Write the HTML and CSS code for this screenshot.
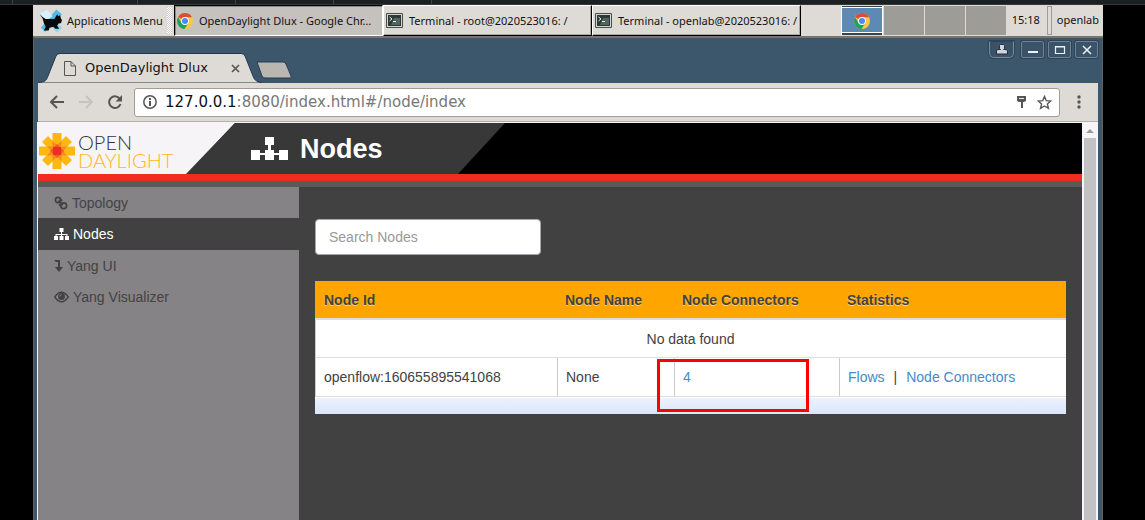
FILE: index.html
```html
<!DOCTYPE html>
<html lang="en">
<head>
<meta charset="utf-8">
<title>OpenDaylight Dlux</title>
<link rel="stylesheet" href="styles.css">
</head>
<body>
<svg class="defs" aria-hidden="true">
  <defs>
    <symbol id="chrome" viewBox="0 0 16 16">
      <circle cx="8" cy="8" r="8" fill="#fbc93b"/>
      <path d="M8 8 1.1 4A8 8 0 0 1 15 4.200H8z" fill="#dd4b3a"/>
      <path d="M1.100 4A8 8 0 0 0 7.500 16L11.300 10 8 8 4.600 10z" fill="#1da261"/>
      <circle cx="8" cy="8" r="3.900" fill="#fff"/>
      <circle cx="8" cy="8" r="3" fill="#4a8af4"/>
    </symbol>
    <symbol id="terminal" viewBox="0 0 17 15">
      <path d="M.5.500h16v14H.5z" fill="#d4d6d2" stroke="#4a4f4b"/>
      <path d="M2 2h13v11H2z" fill="#2b3a36"/>
      <path d="M8 5h6v7H5z" fill="#51665e"/>
      <path d="M3.500 4l2.500 2-2.500 2M7 8.500h3" stroke="#eee" fill="none"/>
    </symbol>
    <symbol id="sitemap" viewBox="0 0 15 12">
      <path d="M5.500 0h4v4H8v2h5.500v2H15v4h-4V8h1.500V7H8v1h1.500v4h-4V8H7V7H2.500v1H4v4H0V8h1.500V6H7V4H5.500z" fill="currentColor"/>
    </symbol>
  </defs>
</svg>
<div class="host-strip"><i></i><i></i><i></i><i></i><i></i></div>
<div class="desktop">
  <nav class="taskbar" aria-label="Taskbar">
    <button class="apps">
      <svg width="25" height="25" viewBox="0 0 25 25"><path d="M1 5 7 1l17 19-5 5-6-6-7 6-4-5 6-7z" fill="#8fd3ef"/><path d="M13 7 18 1l6 5-17 18-5-4z" fill="#52b9e8"/><path d="M1 5l7-4 6 7-7 5z" fill="#d8f0fa"/><path d="M1 6l3 3 3 2h9l3-5 1 2 2-1 1 4 1 1-1 3-3 1-1 2 2 3h-4l-2-2-4 1-1 3H5l2-4-2-4-1-4z" fill="#080808"/></svg>
      <span>Applications Menu</span>
    </button>
    <span class="grip"></span>
    <button class="task current"><svg width="16" height="16"><use href="#chrome"/></svg><span>OpenDaylight Dlux - Google Chr…</span></button>
    <button class="task"><svg width="17" height="15"><use href="#terminal"/></svg><span>Terminal - root@2020523016: /</span></button>
    <button class="task"><svg width="17" height="15"><use href="#terminal"/></svg><span>Terminal - openlab@2020523016: /</span></button>
    <div class="pager">
      <button class="space active" aria-label="Workspace 1"><svg width="16" height="16"><use href="#chrome"/></svg></button>
      <button class="space" aria-label="Workspace 2"></button>
      <button class="space" aria-label="Workspace 3"></button>
      <button class="space" aria-label="Workspace 4"></button>
    </div>
    <span class="clock">15:18</span>
    <span class="divider"></span>
    <span class="user">openlab</span>
  </nav>

  <div class="window">
    <div class="titlebar">
      <div class="tab">
        <svg class="tab-shape" viewBox="0 0 224 30" preserveAspectRatio="none"><path d="M0 29.500C7 29 8 28 10 23L18 3Q19 .5 22 .5H203Q206 .5 207 3L215 23Q217 29.500 224 29.500V30H0z" fill="#dedbd6" stroke="#24394b"/></svg>
        <svg width="12" height="15" viewBox="0 0 12 15" fill="none" stroke="#555"><path d="M.5.500H7L11.500 5v9.500H.5zM7 .5V5h4.500"/></svg>
        <span class="tab-title">OpenDaylight Dlux</span>
        <button class="plain" aria-label="Close tab"><svg width="9" height="9" viewBox="0 0 9 9" stroke="#555" stroke-width="1.700"><path d="M1 1l7 7M8 1 1 8"/></svg></button>
      </div>
      <button class="plain new-tab" aria-label="New tab"><svg width="36" height="18" viewBox="0 0 36 18"><path d="M1 1h26q2 0 3 2l5 12q1 2-1 2H9q-2 0-3-2z" fill="#bab6b1" stroke="#293e50"/></svg></button>
      <div class="controls">
        <button class="ctl profile" aria-label="Profile"><svg width="12" height="11" viewBox="0 0 12 11"><path d="M4.500.500h3l1 1v3l-1 1h3l1 1.500v3H.5V7l1-1.500h3l-1-1v-3z" fill="#d0d5dc" stroke="#22313f"/></svg></button>
        <button class="ctl" aria-label="Minimize"><svg width="12" height="10"><path d="M1 6h10v2H1z" fill="#eef1f3"/></svg></button>
        <button class="ctl" aria-label="Maximize"><svg width="12" height="10"><path d="M1.500 1.500h9v7h-9zM1 2h10" fill="none" stroke="#eef1f3" stroke-width="1.200"/></svg></button>
        <button class="ctl" aria-label="Close"><svg width="12" height="10"><path d="M2 1l8 8M10 1 2 9" stroke="#eef1f3" stroke-width="1.500"/></svg></button>
      </div>
    </div>
    <div class="toolbar">
      <button class="plain" aria-label="Back"><svg width="16" height="14" viewBox="0 0 16 14" fill="none" stroke="#555" stroke-width="2"><path d="M15 7H2M8 1 2 7l6 6"/></svg></button>
      <button class="plain" aria-label="Forward"><svg width="16" height="14" viewBox="0 0 16 14" fill="none" stroke="#c5c3be" stroke-width="2"><path d="M1 7h13M8 1l6 6-6 6"/></svg></button>
      <button class="plain" aria-label="Reload"><svg width="16" height="14" viewBox="0 0 16 14"><path d="M12.500 3.500A5.800 5.800 0 1 0 13.500 9" fill="none" stroke="#555" stroke-width="2"/><path d="M15 0v6.500H8.500z" fill="#555"/></svg></button>
      <div class="address">
        <svg width="14" height="14" viewBox="0 0 14 14"><circle cx="7" cy="7" r="6.200" fill="none" stroke="#555" stroke-width="1.500"/><path d="M6 6h2v5H6zM6 3h2v2H6z" fill="#555"/></svg>
        <a class="url" href="#/node/index"><b>127.0.0.1</b>:8080/index.html#/node/index</a>
        <button class="plain" aria-label="Saved password"><svg width="9" height="12" viewBox="0 0 9 12"><path d="M0 0h9v5L7 6H6v6H4V6H2L0 5z" fill="#555"/><path d="M2 2.500h5" stroke="#eee"/></svg></button>
        <button class="plain" aria-label="Bookmark"><svg width="15" height="15" viewBox="0 0 15 15"><path d="M7.500 1.500 9.300 5.700l4.500.3-3.400 3 1 4.400-3.900-2.400-3.900 2.400 1-4.400-3.400-3 4.500-.3z" fill="none" stroke="#555" stroke-width="1.400"/></svg></button>
      </div>
      <button class="plain menu" aria-label="Menu"><svg width="4" height="14" fill="#555"><circle cx="2" cy="2" r="1.700"/><circle cx="2" cy="7" r="1.700"/><circle cx="2" cy="12" r="1.700"/></svg></button>
    </div>

    <div class="viewport">
      <div class="page">
        <header class="banner">
          <a class="brand" href="#/">
            <svg width="36" height="36" viewBox="0 0 36 36">
              <path d="M13.500 0h9v36h-9zM0 13.500h36v9H0zM3 9l6-6 24 24-6 6zM27 3l6 6L9 33l-6-6z" fill="#fdb813"/>
              <path d="M13.500 8 18 12l4.500-4v5.500H28L24 18l4 4.500h-5.500V28L18 24l-4.500 4v-5.500H8l4-4.500-4-4.500h5.500z" fill="#f68b1f"/>
              <path d="M18 11l7 7-7 7-7-7z" fill="#f15a24"/>
              <path d="M14 14h8v8h-8z" fill="#ee2e24"/>
            </svg>
            <span class="wordmark"><span>OPEN</span><span class="day">DAYLIGHT</span></span>
          </a>
          <div class="heading">
            <svg width="37" height="23" viewBox="0 0 37 23" fill="#fff"><path d="M14 0h9v8h-3v5h3v3h5v-3h9v10h-9v-5h-5v5h-9v-5H9v5H0V13h9v3h5v-3h3V8h-3z"/></svg>
            <h1>Nodes</h1>
          </div>
        </header>
        <div class="body">
          <nav class="sidebar" aria-label="Modules">
            <a href="#/topology"><svg width="14" height="14" viewBox="0 0 14 14" fill="none" stroke="currentColor" stroke-width="1.700"><circle cx="4" cy="4" r="2.600"/><circle cx="9.700" cy="9.700" r="2.900"/><path d="M4.500 4.500 9 9M7 3.500 8 5M5 8l1.500 2"/></svg>Topology</a>
            <a class="active" href="#/node"><svg width="15" height="12"><use href="#sitemap"/></svg>Nodes</a>
            <a href="#/yangui"><svg width="9" height="12" viewBox="0 0 9 12" fill="currentColor"><path d="M0 0h6v7h3l-4 5-4-5h3V2H2z"/></svg>Yang UI</a>
            <a href="#/yangvisualizer"><svg width="15" height="12" viewBox="0 0 15 12"><path d="M.7 6Q7.500-3.500 14.300 6 7.500 15.500.7 6z" fill="none" stroke="currentColor" stroke-width="1.300"/><circle cx="7.500" cy="5.500" r="3.400" fill="currentColor"/><path d="M5.700 5.500q0-1.700 1.800-1.800" fill="none" stroke="#868386"/></svg>Yang Visualizer</a>
          </nav>
          <main class="content">
            <input class="search" type="text" placeholder="Search Nodes" aria-label="Search Nodes">
            <div class="table-wrap">
              <table>
                <colgroup><col class="c-id"><col class="c-name"><col class="c-conn"><col></colgroup>
                <thead><tr><th>Node Id</th><th>Node Name</th><th>Node Connectors</th><th>Statistics</th></tr></thead>
                <tbody>
                  <tr><td class="empty" colspan="4">No data found</td></tr>
                  <tr><td>openflow:160655895541068</td><td>None</td><td class="marked"><a href="#/node/connectors">4</a><span class="marker"></span></td><td><a href="#/node/flows">Flows</a><span class="bar">|</span><a href="#/node/ports">Node Connectors</a></td></tr>
                </tbody>
              </table>
              <div class="table-foot"></div>
            </div>
          </main>
        </div>
      </div>
      <div class="scrollbar"><svg width="16" height="15"><path d="M4 10l4-4 4 4z" fill="#9d9a9d"/></svg><span class="thumb"></span></div>
    </div>
  </div>
</div>
</body>
</html>
```

FILE: styles.css
```css
* { box-sizing: border-box; }
body {
  margin: 0;
  min-height: 100vh;
  display: flex;
  flex-direction: column;
  background: #000;
  font: 14px/20px "Liberation Sans", Arial, sans-serif;
  color: #424242;
}
.defs { position: absolute; width: 0; height: 0; }
svg { display: block; flex: none; }
button { font: inherit; color: inherit; padding: 0; margin: 0; }
a { text-decoration: none; }
.plain { border: 0; background: none; display: block; }

.host-strip { height: 5px; background: #1b2022; border-bottom: 1px solid #343839; display: flex; gap: 97px; padding-left: 12px; }
.host-strip i { width: 1px; background: #3d4142; }
.host-strip i:first-child { margin-right: 27px; }

.desktop { flex: 1; display: flex; flex-direction: column; padding: 0 42px 0 33px; }

.taskbar {
  height: 31px;
  display: flex;
  align-items: stretch;
  background: #dedbd6;
  font: 11px/30px "Noto Sans", sans-serif;
  color: #111;
  white-space: nowrap;
}
.apps { width: 134px; border: 0; background: none; display: flex; align-items: center; gap: 4px; padding-left: 6px; }
.apps svg { width: 24px; }
.grip { width: 5px; margin: 2px 2px 2px 0; background: repeating-conic-gradient(#fff 0 25%, #d2cfca 0 50%) 0 0 / 2px 2px; }
.task {
  width: 209px;
  display: flex;
  align-items: center;
  gap: 6px;
  padding-left: 2px;
  background: #dedbd6;
  border: 1px solid;
  border-color: #fff #000 #000 #fff;
  box-shadow: inset -1px -1px #aaa7a2;
}
.task.current { background: #c5c2bd; border-color: #000 #fff #fff #000; box-shadow: inset 1px 1px #8d8b87; }
.pager { display: flex; margin-left: auto; width: 165px; gap: 1px; padding: 1px 0; }
.space { flex: 1; border: 0; background: #9d9c96; }
.space.active { display: grid; place-items: center; background: #5c8ab5; border: 1px solid #fff; border-width: 0 1px; box-shadow: inset 0 1px #34454f, inset 0 -2px #34454f, inset 0 2px #fff, inset 0 -3px #fff; }
.clock { margin-left: 6px; }
.divider { width: 5px; margin: 1px 5px 1px 7px; border: 1px solid #9d9c96; }
.user { margin-right: 4px; }

.window { flex: 1; display: flex; flex-direction: column; padding: 0 5px 0 4px; background: #3c566b; border-top: 2px solid #77756f; border-left: 1px solid #5d6265; box-shadow: inset -1px 0 #5d6265; }
.titlebar { height: 45px; display: flex; align-items: flex-end; }
.tab { position: relative; width: 224px; height: 30px; display: flex; align-items: center; gap: 9px; padding: 0 22px 0 26px; font: 13px/20px "DejaVu Sans", sans-serif; color: #111; }
.tab > * { position: relative; }
.tab .tab-shape { position: absolute; inset: 0; width: 100%; height: 100%; }
.tab-title { flex: 1; white-space: nowrap; }
.new-tab { margin-bottom: 4px; margin-left: -6px; }
.controls { margin-left: auto; align-self: flex-start; display: flex; gap: 4px; padding-top: 3px; }
.ctl { width: 23px; height: 17px; display: grid; place-items: center; background: #3a5368; border: 1px solid #708292; border-radius: 2px; box-shadow: 0 0 0 1px #2e4558; }
.profile { width: 25px; border-color: #2e4558 #7b8b99 #7b8b99; border-radius: 0 0 5px 5px; margin-right: 3px; }

.toolbar { height: 39px; display: flex; align-items: center; gap: 13px; padding: 0 17px 0 11px; background: #dedbd6; border-bottom: 1px solid #b3b0ac; }
.address { flex: 1; height: 29px; margin-left: -2px; margin-right: 4px; padding: 0 7px 0 8px; display: flex; align-items: center; gap: 8px; background: #fff; border: 1px solid #a19d96; border-radius: 3px; font: 15px/20px "DejaVu Sans", sans-serif; }
.address button + button { margin-left: 3px; }
.url { flex: 1; color: #777; }
.url b { font-weight: 400; color: #111; }

.viewport { flex: 1; display: flex; border: 1px solid #f7f4f7; border-width: 1px 0 0 1px; margin-left: -1px; }
.page { flex: 1; display: flex; flex-direction: column; background: #414141; min-width: 0; }
.banner { height: 64px; display: flex; background: #000; border-bottom: 6px solid #5a5a5a; box-shadow: inset 0 -7px #ee2e24; padding-bottom: 7px; }
.brand { width: 197px; display: flex; align-items: center; gap: 3px; padding-left: 1px; padding-top: 4px; background: #f7f4f8; clip-path: polygon(0 0, 100% 0, 149px 100%, 0 100%); }
.wordmark { display: flex; flex-direction: column; font: 300 20px/18px Lato, sans-serif; color: #333; }
.day { color: #fdb813; }
.heading { width: 319px; margin-left: -49px; padding-left: 65px; display: flex; align-items: center; gap: 12px; background: #383838; color: #fff; clip-path: polygon(49px 0, 100% 0, calc(100% - 47px) 100%, 0 100%); }
h1 { margin: 0; font-size: 27px; line-height: 32px; }

.body { flex: 1; display: flex; }
.sidebar { width: 261px; background: #868386; }
.sidebar a { height: 31px; display: flex; align-items: center; gap: 4px; padding-left: 16px; color: #424242; }
.sidebar a.active { height: 32px; background: #414141; color: #fff; }
.content { flex: 1; padding: 32px 16px; min-width: 0; }
.search { display: block; width: 226px; height: 36px; padding: 6px 13px; border: 1px solid #aaa7b0; border-radius: 4px; background: #fff; font: inherit; color: #555; }
.search::placeholder { color: #999; opacity: 1; }
.table-wrap { margin-top: 26px; background: #fff; }
table { width: 100%; table-layout: fixed; border-collapse: separate; border-spacing: 0; }
.c-id { width: 242px; }
.c-name { width: 117px; }
.c-conn { width: 165px; }
th { height: 39px; padding: 0 8px; text-align: left; background: #ffa500; border-bottom: 2px solid #ddd; text-shadow: 0 1px rgba(255, 255, 255, .5); white-space: nowrap; }
th:first-child { padding-left: 9px; }
td { height: 38px; padding: 0 9px 0 8px; border-left: 1px solid #ccc; border-bottom: 1px solid #ddd; white-space: nowrap; }
tr:last-child td { height: 39px; }
.empty { text-align: center; }
td a { color: #428bca; }
.bar { margin: 0 9px; }
.marked { position: relative; }
.marker { position: absolute; left: -18px; top: 1px; width: 152px; height: 53px; border: 3px solid #f00; }
.table-foot { height: 17px; border-top: 1px solid #fff; background: linear-gradient(#edf2fe, #d9e7fa); }

.scrollbar { width: 16px; background: #f7f4f7; display: flex; flex-direction: column; }
.thumb { flex: 1; margin: 0 2px; background: #c4c1c4; }
```
